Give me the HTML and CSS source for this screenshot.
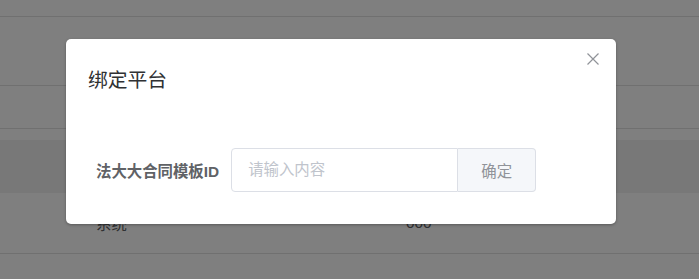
FILE: index.html
```html
<!DOCTYPE html>
<html lang="zh-CN">
<head>
    <meta charset="UTF-8">
    <title>绑定平台</title>
    <link rel="stylesheet" href="styles.css">
</head>
<body>
<div id="page">
    <div class="line-row top"></div>
    <div class="line-row mid"></div>
    <div class="line-row low"></div>
    <div class="spacer"></div>
    <div class="thead"></div>
    <div class="trow">
        <span class="cell first">系统</span>
        <span class="cell second">000</span>
    </div>
</div>

<div class="mask"></div>

<div class="dialog-wrapper">
    <div class="dialog">
        <div class="dialog-header">
            <span class="dialog-title">绑定平台</span>
            <span class="dialog-close">
                <svg width="12" height="12" viewBox="0 0 12 12">
                    <path d="M0.5 0.5 L11.5 11.5 M11.5 0.5 L0.5 11.5" stroke="#909399" stroke-width="1.2" fill="none"/>
                </svg>
            </span>
        </div>
        <div class="dialog-body">
            <div class="form-item">
                <label class="form-label">法大大合同模板ID</label>
                <div class="input-group">
                    <input class="input-inner" type="text" placeholder="请输入内容">
                    <div class="input-append">确定</div>
                </div>
            </div>
        </div>
    </div>
</div>
</body>
</html>
```

FILE: styles.css
```css
*{
    margin: 0;
    padding: 0;
    box-sizing: border-box;
}
body{
    width: 699px;
    height: 279px;
    overflow: hidden;
    background: #fff;
    font-family: "Liberation Sans", "Noto Sans CJK SC", sans-serif;
    position: relative;
}
#page{
    width: 699px;
}
.line-row{
    border-bottom: 1px solid #e0e0e0;
}
.line-row.top{
    height: 17px;
}
.line-row.mid{
    height: 69px;
}
.line-row.low{
    height: 43px;
}
.spacer{
    height: 11px;
}
.thead{
    height: 53px;
    background: #f0f0f0;
}
.trow{
    height: 61px;
    border-bottom: 1px solid #e0e0e0;
    display: flex;
    align-items: center;
    font-size: 15.4px;
    color: #606266;
}
.cell.first{
    margin-left: 96px;
    width: 310px;
}
.mask{
    position: absolute;
    left: 0;
    top: 0;
    right: 0;
    bottom: 0;
    background: rgba(0,0,0,0.5);
}
.dialog-wrapper{
    position: absolute;
    left: 0;
    top: 0;
    right: 0;
    bottom: 0;
}
.dialog{
    position: relative;
    width: 550px;
    margin: 39px 0 0 66px;
    background: #fff;
    border-radius: 5px;
    box-shadow: 0 1px 3px rgba(0,0,0,0.3);
}
.dialog-header{
    padding: 28px 22px 0 22px;
}
.dialog-title{
    display: block;
    font-size: 19.8px;
    line-height: 26px;
    color: #303133;
}
.dialog-close{
    position: absolute;
    top: 14px;
    right: 17px;
    width: 12px;
    height: 12px;
    display: flex;
    cursor: pointer;
}
.dialog-body{
    padding: 55px 30px 32px 30px;
}
.form-item{
    display: flex;
    align-items: center;
}
.form-label{
    font-size: 15.4px;
    font-weight: bold;
    color: #606266;
    padding-right: 12px;
}
.input-group{
    display: flex;
    height: 44px;
}
.input-inner{
    width: 227px;
    height: 44px;
    border: 1px solid #dcdfe6;
    border-radius: 4px 0 0 4px;
    padding: 0 16px;
    font-size: 15.4px;
    font-family: "Liberation Sans", "Noto Sans CJK SC", sans-serif;
    color: #606266;
    outline: none;
}
.input-inner::placeholder{
    color: #c0c4cc;
}
.input-append{
    width: 78px;
    height: 44px;
    background: #f5f7fa;
    border: 1px solid #dcdfe6;
    border-left: 0;
    border-radius: 0 4px 4px 0;
    color: #909399;
    font-size: 15.4px;
    display: flex;
    align-items: center;
    justify-content: center;
}
```
